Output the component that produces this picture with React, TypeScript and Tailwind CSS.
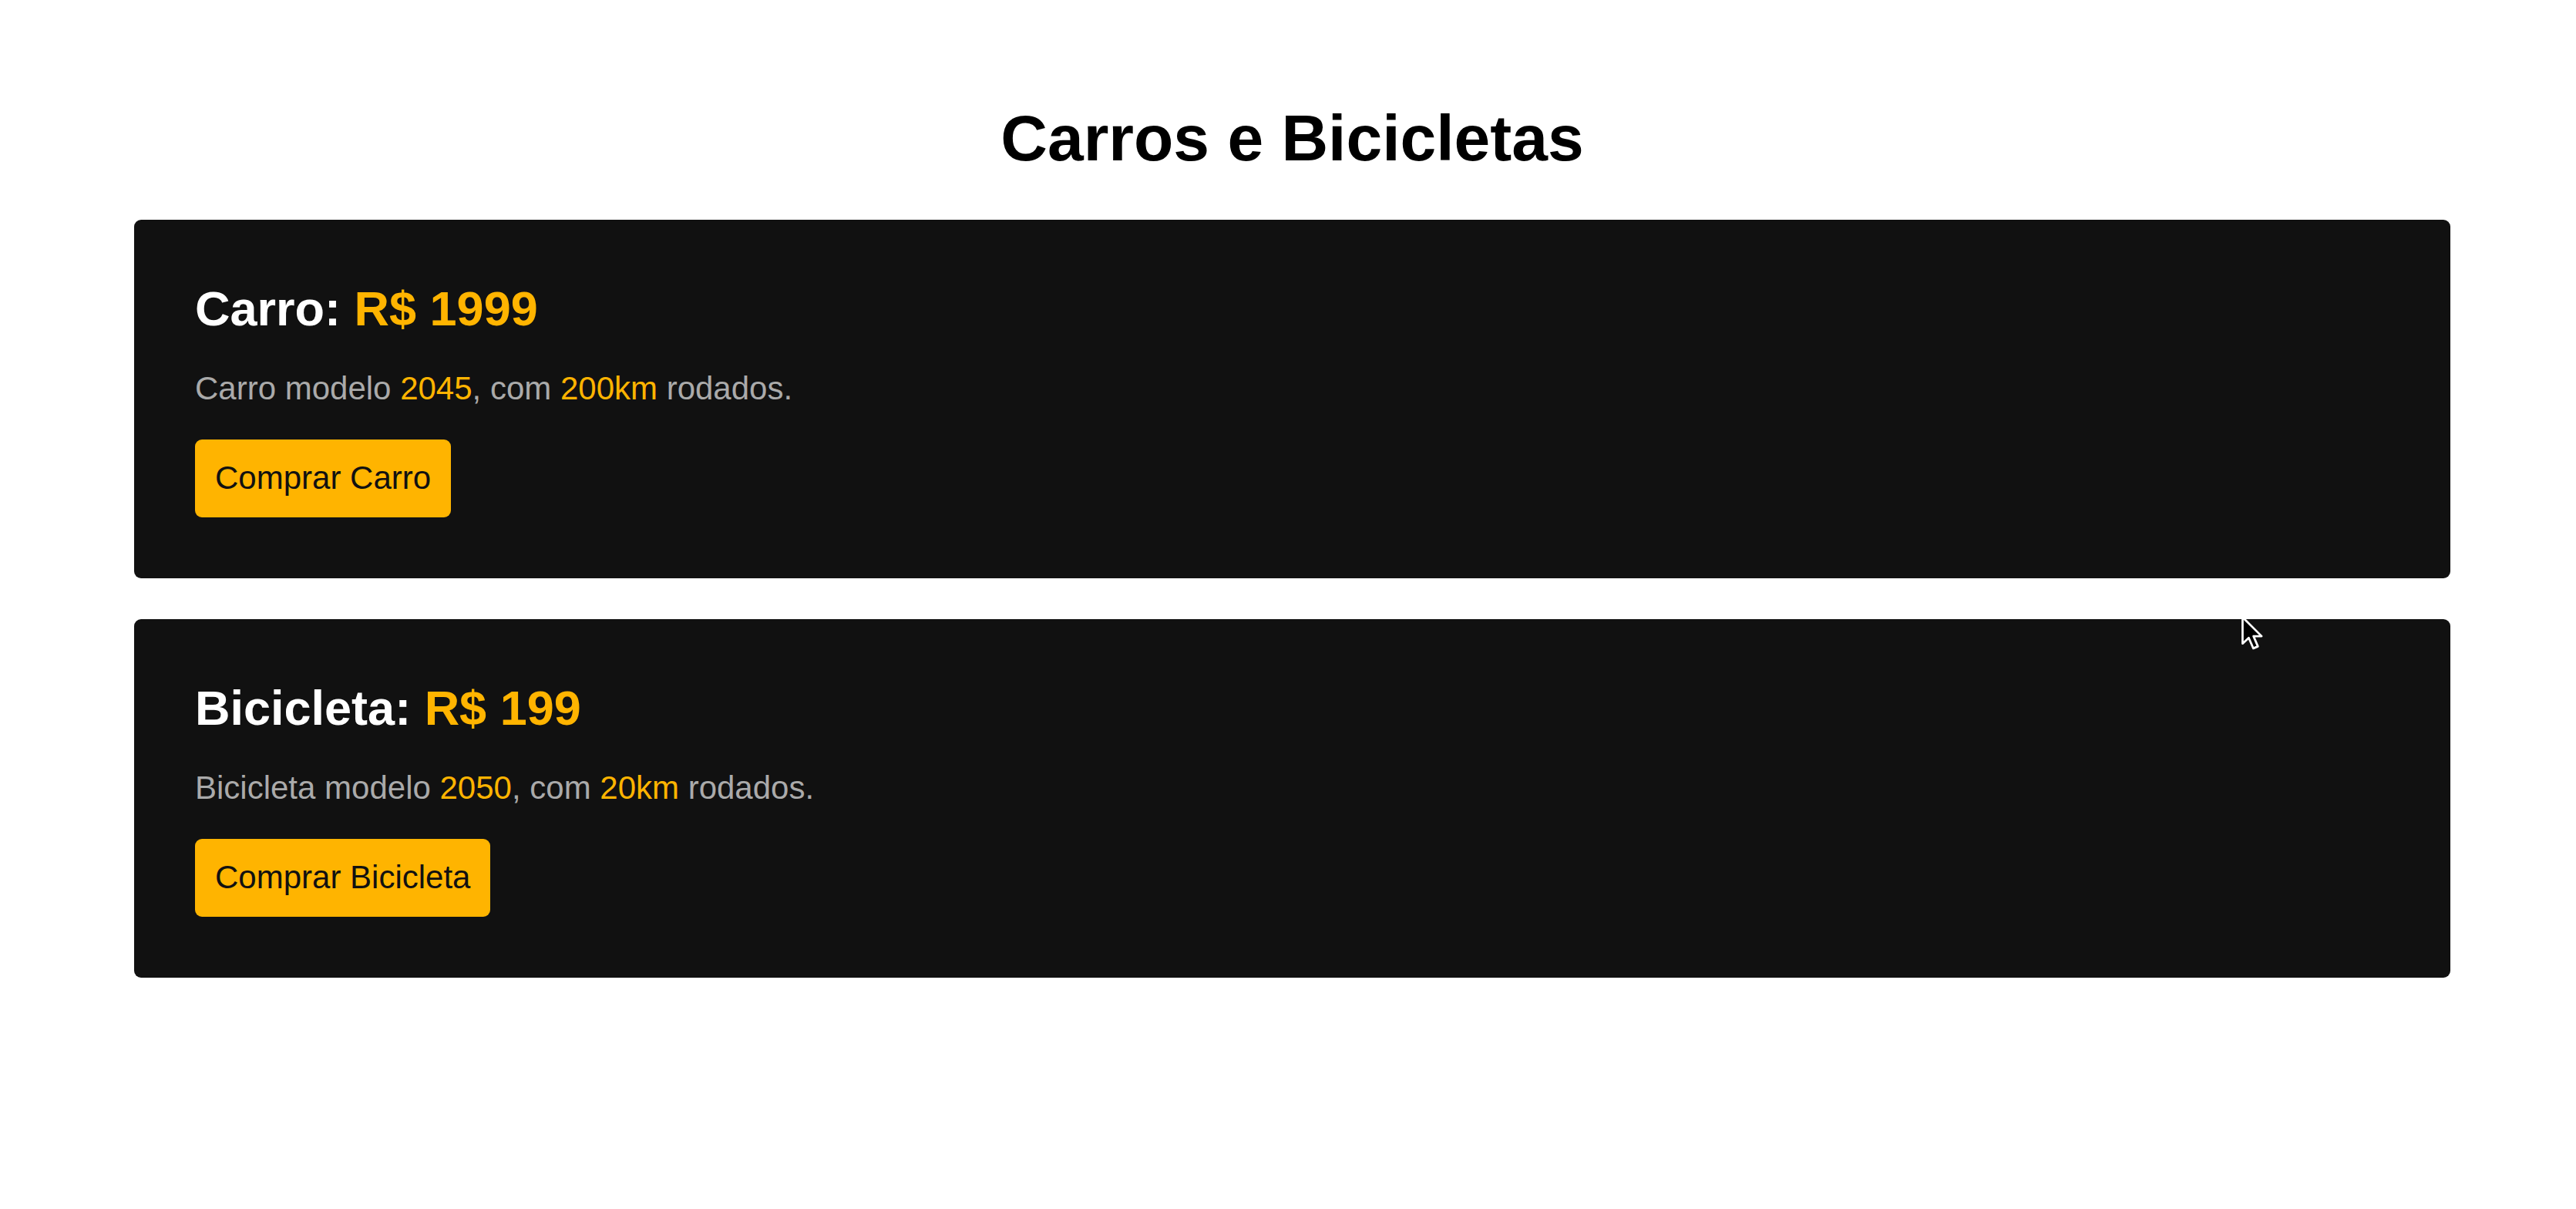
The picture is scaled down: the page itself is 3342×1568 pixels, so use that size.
import React from "react";

type Item = {
  name: string;
  price: string;
  year: string;
  km: string;
};

const items: Item[] = [
  { name: "Carro", price: "R$ 1999", year: "2045", km: "200km" },
  { name: "Bicicleta", price: "R$ 199", year: "2050", km: "20km" },
];

function Card({ item }: { item: Item }) {
  return (
    <div className="rounded-[9px] bg-[#111111] p-[79px]">
      <h2 className="mb-[44px] text-[63px] font-bold leading-[1.15] text-white">
        {item.name}: <span className="text-[#ffb400]">{item.price}</span>
      </h2>
      <p className="mb-[42px] text-[42px] leading-[1.15] text-[#aaaaaa]">
        {item.name} modelo <span className="text-[#ffb400]">{item.year}</span>, com{" "}
        <span className="text-[#ffb400]">{item.km}</span> rodados.
      </p>
      <button className="block rounded-[9px] bg-[#ffb400] px-[26px] py-[26px] text-[42px] leading-[1.15] text-[#111111]">
        Comprar {item.name}
      </button>
    </div>
  );
}

export default function App() {
  return (
    <div
      className="relative min-h-screen bg-white pl-[174px] pr-[163px] pt-[131px]"
      style={{ fontFamily: '"Liberation Sans", Arial, sans-serif' }}
    >
      <h1 className="mb-[57px] text-center text-[84px] font-bold leading-[1.15] text-black">
        Carros e Bicicletas
      </h1>
      <div className="flex flex-col gap-[53px]">
        {items.map((it) => (
          <Card key={it.name} item={it} />
        ))}
      </div>
      <svg
        className="absolute left-[2906px] top-[797px]"
        width="32"
        height="48"
        viewBox="0 0 14 21"
      >
        <path
          d="M1.5 1.5 L1.5 16.5 L5 13.2 L7.6 19.2 L10.2 18.1 L7.7 12.3 L12.3 12.3 Z"
          fill="#000"
          stroke="#fff"
          strokeWidth="1.2"
          strokeLinejoin="round"
        />
      </svg>
    </div>
  );
}
